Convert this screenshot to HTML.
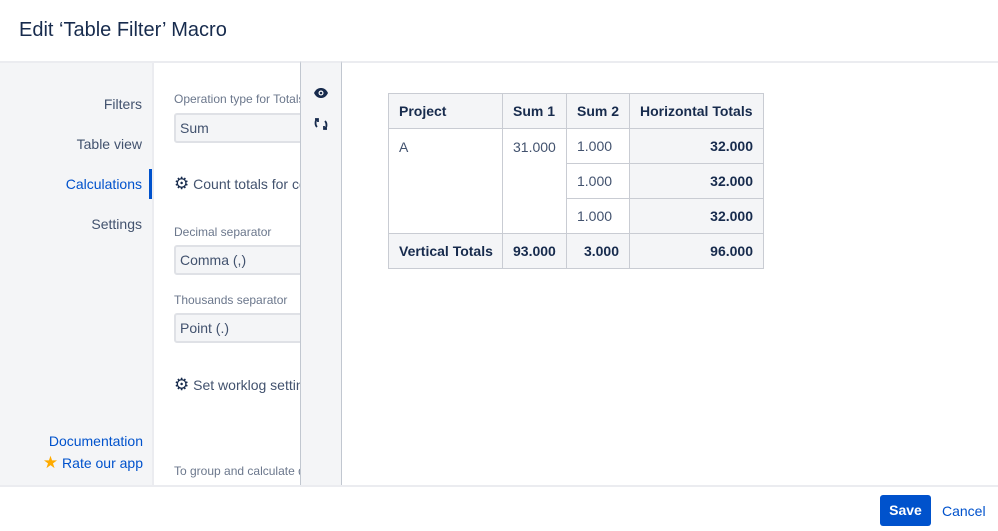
<!DOCTYPE html>
<html><head><style>
*{box-sizing:border-box;margin:0;padding:0}
body{width:998px;height:531px;position:relative;background:#fff;font-family:"Liberation Sans",sans-serif;color:#172b4d;overflow:hidden}
.abs{position:absolute}
h1{position:absolute;left:19px;top:19px;font-size:20px;font-weight:normal;color:#172b4d}
.nav{left:0;top:61px;width:152px;height:424px;background:#f4f5f7;border-top:2px solid #ebecf0}
.nav div{position:absolute;right:10px;font-size:14px;color:#42526e}
.form{left:152px;top:61px;width:148px;height:424px;background:#fff;border-left:2px solid #ebecf0;border-top:2px solid #ebecf0;overflow:hidden}
.lbl{position:absolute;left:20px;font-size:12px;color:#6b778c;white-space:nowrap}
.inp{position:absolute;left:20px;width:140px;height:30px;background:#f4f5f7;border:2px solid #dfe1e6;border-radius:3px;font-size:14px;color:#42526e;padding:5px 4px}
.gear{position:absolute;left:20px;font-size:14px;color:#42526e;white-space:nowrap}
.gear b{font-size:17px;color:#172b4d;font-weight:normal}
.tool{left:300px;top:61px;width:42px;height:424px;background:#f4f5f7;border-left:1px solid #c1c7d0;border-right:1px solid #c1c7d0;border-top:2px solid #ebecf0}
.content{left:342px;top:61px;width:656px;height:424px;border-top:2px solid #ebecf0}
table{position:absolute;left:388px;top:93px;border-collapse:collapse;font-size:14px;table-layout:fixed;width:375px}
td{border:1px solid #c9ccd3;height:35px;padding:0 10px;color:#42526e;vertical-align:middle;white-space:nowrap}
.h td,.b{background:#f4f5f7;font-weight:bold;color:#172b4d}
.r{text-align:right}
.foot{left:0;top:485px;width:998px;height:2px;background:#ebecf0}
.save{left:880px;top:495px;width:51px;height:31px;background:#0052cc;color:#fff;font-weight:bold;font-size:14px;border-radius:3px;text-align:center;line-height:31px}
</style></head><body>
<h1>Edit ‘Table Filter’ Macro</h1>
<div class="abs nav">
<div style="top:33px">Filters</div>
<div style="top:73px">Table view</div>
<div style="top:113px;color:#0052cc">Calculations</div>
<div style="top:153px">Settings</div>
<div style="top:370px;right:9px;color:#0052cc">Documentation</div>
<div style="top:390px;right:9px;color:#0052cc"><span style="color:#ffab00;font-size:17px">★</span> Rate our app</div>
<div style="right:0;width:3px;height:30px;background:#0052cc;top:106px"></div>
</div>
<div class="abs form">
<div class="lbl" style="top:29px">Operation type for Totals</div>
<div class="inp" style="top:50px">Sum</div>
<div class="gear" style="top:111px"><b>⚙</b> Count totals for columns</div>
<div class="lbl" style="top:162px">Decimal separator</div>
<div class="inp" style="top:182px">Comma (,)</div>
<div class="lbl" style="top:230px">Thousands separator</div>
<div class="inp" style="top:250px">Point (.)</div>
<div class="gear" style="top:312px"><b>⚙</b> Set worklog settings</div>
<div class="lbl" style="top:401px">To group and calculate data</div>
</div>
<div class="abs tool">
<svg class="abs" style="left:12px;top:24px" width="16" height="12" viewBox="0 0 16 12"><path d="M1 6C3 2 5.5 1 8 1s5 1 7 5c-2 4-4.5 5-7 5S3 10 1 6z" fill="#172b4d"/><circle cx="8" cy="6" r="2.5" fill="#fff"/><circle cx="8" cy="6" r="1.3" fill="#172b4d"/></svg>
<svg class="abs" style="left:12px;top:53px" width="16" height="16" viewBox="0 0 16 16" fill="none" stroke="#172b4d" stroke-width="1.8"><path d="M4 3C2 5 2 9 4 11M12 13c2-2 2-6 0-8"/><path d="M2 3h3v3M14 13h-3v-3"/></svg>
</div>
<div class="abs content"></div>
<table>
<colgroup><col style="width:114px"><col style="width:64px"><col style="width:63px"><col style="width:134px"></colgroup>
<tr class="h"><td>Project</td><td>Sum 1</td><td>Sum 2</td><td>Horizontal Totals</td></tr>
<tr><td rowspan="3" style="vertical-align:top;padding-top:10px">A</td><td rowspan="3" style="vertical-align:top;padding-top:10px">31.000</td><td>1.000</td><td class="b r">32.000</td></tr>
<tr><td>1.000</td><td class="b r">32.000</td></tr>
<tr><td>1.000</td><td class="b r">32.000</td></tr>
<tr><td class="b">Vertical Totals</td><td class="b">93.000</td><td class="b r">3.000</td><td class="b r">96.000</td></tr>
</table>
<div class="abs foot"></div>
<div class="abs save">Save</div>
<div class="abs" style="left:942px;top:503px;font-size:14px;color:#0052cc">Cancel</div>
</body></html>
